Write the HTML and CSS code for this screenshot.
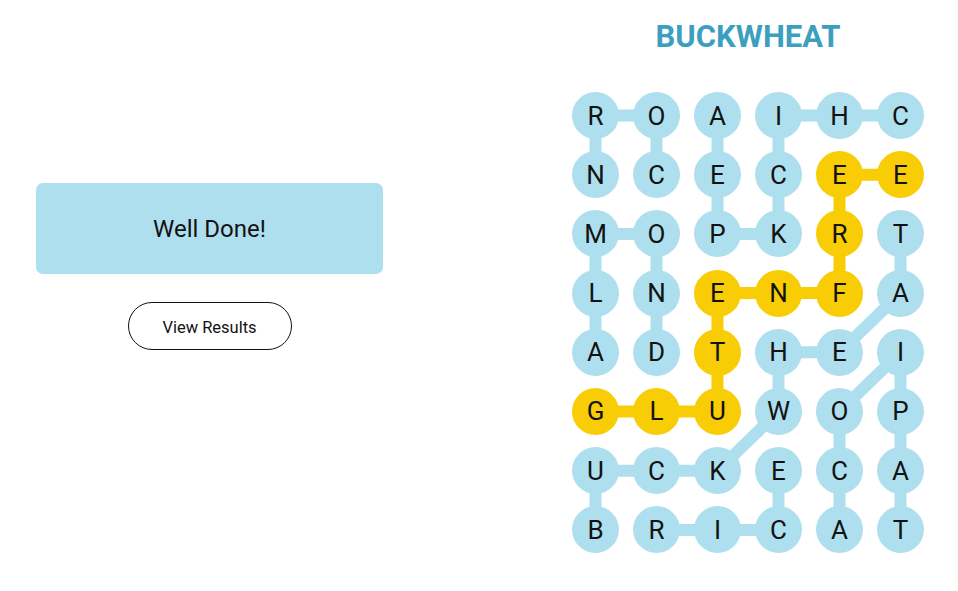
FILE: index.html
```html
<!DOCTYPE html>
<html lang="en">
<head>
    <meta charset="UTF-8">
    <meta name="viewport" content="width=device-width, initial-scale=1.0">
    <title>Strands</title>
    <link rel="stylesheet" href="styles.css">
</head>
<body>
    <div class="app">
        <div class="side">
            <div class="banner">Well Done!</div>
            <button class="results-button">View Results</button>
        </div>

        <div class="game">
            <h1 class="theme">BUCKWHEAT</h1>

            <div class="board">
                <!-- links between letters of found words -->
                <svg class="links" viewBox="0 0 352 461.4" width="352" height="461.4">
                    <g class="link-found">
                        <line x1="23.5" y1="23.5" x2="84.5" y2="23.5"/>
                        <line x1="206.5" y1="23.5" x2="328.5" y2="23.5"/>
                        <line x1="23.5" y1="141.9" x2="84.5" y2="141.9"/>
                        <line x1="145.5" y1="141.9" x2="206.5" y2="141.9"/>
                        <line x1="206.5" y1="260.3" x2="267.5" y2="260.3"/>
                        <line x1="23.5" y1="378.7" x2="145.5" y2="378.7"/>
                        <line x1="84.5" y1="437.9" x2="206.5" y2="437.9"/>

                        <line x1="23.5" y1="23.5" x2="23.5" y2="82.7"/>
                        <line x1="23.5" y1="141.9" x2="23.5" y2="260.3"/>
                        <line x1="23.5" y1="378.7" x2="23.5" y2="437.9"/>
                        <line x1="84.5" y1="23.5" x2="84.5" y2="82.7"/>
                        <line x1="84.5" y1="141.9" x2="84.5" y2="260.3"/>
                        <line x1="145.5" y1="23.5" x2="145.5" y2="141.9"/>
                        <line x1="206.5" y1="23.5" x2="206.5" y2="141.9"/>
                        <line x1="206.5" y1="260.3" x2="206.5" y2="319.5"/>
                        <line x1="206.5" y1="378.7" x2="206.5" y2="437.9"/>
                        <line x1="267.5" y1="319.5" x2="267.5" y2="437.9"/>
                        <line x1="328.5" y1="141.9" x2="328.5" y2="201.1"/>
                        <line x1="328.5" y1="260.3" x2="328.5" y2="437.9"/>

                        <line x1="328.5" y1="201.1" x2="267.5" y2="260.3"/>
                        <line x1="328.5" y1="260.3" x2="267.5" y2="319.5"/>
                        <line x1="206.5" y1="319.5" x2="145.5" y2="378.7"/>
                    </g>
                    <polyline class="link-spangram" points="328.5,82.7 267.5,82.7 267.5,201.1 145.5,201.1 145.5,319.5 23.5,319.5"/>
                </svg>

                <div class="cell">R</div><div class="cell">O</div><div class="cell">A</div><div class="cell">I</div><div class="cell">H</div><div class="cell">C</div>
                <div class="cell">N</div><div class="cell">C</div><div class="cell">E</div><div class="cell">C</div><div class="cell spangram">E</div><div class="cell spangram">E</div>
                <div class="cell">M</div><div class="cell">O</div><div class="cell">P</div><div class="cell">K</div><div class="cell spangram">R</div><div class="cell">T</div>
                <div class="cell">L</div><div class="cell">N</div><div class="cell spangram">E</div><div class="cell spangram">N</div><div class="cell spangram">F</div><div class="cell">A</div>
                <div class="cell">A</div><div class="cell">D</div><div class="cell spangram">T</div><div class="cell">H</div><div class="cell">E</div><div class="cell">I</div>
                <div class="cell spangram">G</div><div class="cell spangram">L</div><div class="cell spangram">U</div><div class="cell">W</div><div class="cell">O</div><div class="cell">P</div>
                <div class="cell">U</div><div class="cell">C</div><div class="cell">K</div><div class="cell">E</div><div class="cell">C</div><div class="cell">A</div>
                <div class="cell">B</div><div class="cell">R</div><div class="cell">I</div><div class="cell">C</div><div class="cell">A</div><div class="cell">T</div>
            </div>
        </div>
    </div>
</body>
</html>
```

FILE: styles.css
```css
body {
    margin: 0;
    font-family: Roboto, "Liberation Sans", sans-serif;
    color: #121212;
    background-color: #fff;
}

.app {
    display: flex;
    justify-content: space-between;
    height: 591px;
}

/* left column: end of game message */
.side {
    width: 419px;
    box-sizing: border-box;
    padding: 183px 36px 0 36px;
    display: flex;
    flex-direction: column;
    align-items: center;
}

.banner {
    width: 100%;
    height: 91px;
    background-color: #aedfee;
    border-radius: 7px;
    display: flex;
    align-items: center;
    justify-content: center;
    font-size: 24px;
}

.results-button {
    margin-top: 28px;
    width: 164px;
    height: 48px;
    padding: 3px 0 0 0;
    border: 1px solid #121212;
    border-radius: 24px;
    background-color: #fff;
    font-family: inherit;
    font-size: 16.5px;
    color: #121212;
    cursor: pointer;
}

/* right column: theme + letter board */
.game {
    width: 420px;
    padding-top: 19px;
    display: flex;
    flex-direction: column;
    align-items: center;
}

.theme {
    margin: 0;
    font-size: 31px;
    line-height: 36px;
    font-weight: 700;
    color: #3d9fc0;
}

.board {
    position: relative;
    margin-top: 37px;
    display: grid;
    grid-template-columns: repeat(6, 47px);
    grid-auto-rows: 47px;
    column-gap: 14px;
    row-gap: 12.2px;
}

.links {
    position: absolute;
    top: 0;
    left: 0;
}

.link-found line {
    stroke: #aedfee;
    stroke-width: 12;
}

.link-spangram {
    fill: none;
    stroke: #f8cd05;
    stroke-width: 12;
}

.cell {
    position: relative; /* keeps letters above the links */
    border-radius: 50%;
    background-color: #aedfee;
    display: flex;
    align-items: center;
    justify-content: center;
    font-size: 26px;
}

.cell.spangram {
    background-color: #f8cd05;
}
```
